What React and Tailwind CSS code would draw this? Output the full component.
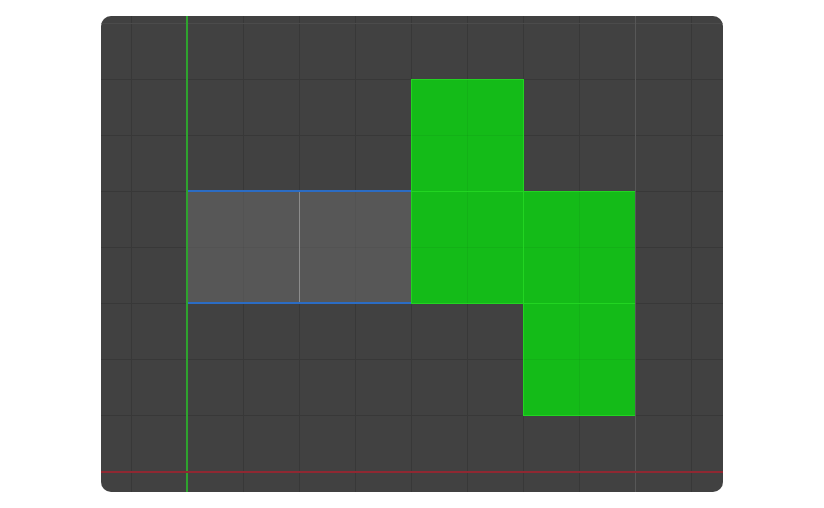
// board tiles: col / row in the 4x3 block that starts at the green axis
// selection first so the green cells paint over its right edge
const tiles = [
  { key: 'sel', cls: 'col-start-1 col-span-2 row-start-2 -my-px -ml-px -mr-[3px] p-[2px] bg-[#2b6cc4]', fill: 'bg-[#575757]', sel: true },
  { key: 'g1', cls: 'col-start-3 row-start-1 -mr-px -mb-px p-px bg-[#22d422]', fill: 'bg-[#14bb18]' },
  { key: 'g2', cls: 'col-start-3 row-start-2 -mr-px -mb-px p-px bg-[#22d422]', fill: 'bg-[#14bb18]' },
  { key: 'g3', cls: 'col-start-4 row-start-2 -mr-px -mb-px p-px bg-[#22d422]', fill: 'bg-[#14bb18]' },
  { key: 'g4', cls: 'col-start-4 row-start-3 -mr-px -mb-px p-px bg-[#22d422]', fill: 'bg-[#14bb18]' },
]

function Tile({ cls, fill, sel }) {
  return (
    <div className={`${cls} flex`}>
      <div
        className={`${fill} flex flex-1 bg-[linear-gradient(to_right,rgba(0,0,0,0.05)_1px,transparent_1px),linear-gradient(to_bottom,rgba(0,0,0,0.05)_1px,transparent_1px)] bg-[length:56px_56px] bg-[position:55px_55px]`}
      >
        {sel && (
          <>
            <div className="w-[111px]" />
            <div className="w-px bg-[#8c8c8c]" />
            <div className="flex-1" />
          </>
        )}
      </div>
    </div>
  )
}

export default function App() {
  return (
    <div className="min-h-[508px] bg-white pt-4">
      <div className="relative mx-auto h-[476px] w-[622px] overflow-hidden rounded-[10px] bg-[#414141] bg-[linear-gradient(to_right,#383838_1px,transparent_1px),linear-gradient(to_bottom,#383838_1px,transparent_1px)] bg-[length:56px_56px] bg-[position:30px_7px]">
        {/* lighter guide lines */}
        <div className="absolute left-0 right-0 top-[7px] h-px bg-[#4b4b4b]" />
        <div className="absolute top-0 bottom-0 left-[534px] w-px bg-[#575757]" />

        <div className="grid grid-cols-[repeat(4,112px)] grid-rows-[repeat(3,112px)] pl-[86px] pt-[63px]">
          {tiles.map((t) => (
            <Tile key={t.key} cls={t.cls} fill={t.fill} sel={t.sel} />
          ))}
        </div>

        {/* axes */}
        <div className="absolute top-0 bottom-0 left-[85px] w-[2px] bg-[#2ea32e]" />
        <div className="absolute left-0 right-0 top-[455px] h-[2px] bg-[#8f2832]" />
      </div>
    </div>
  )
}
